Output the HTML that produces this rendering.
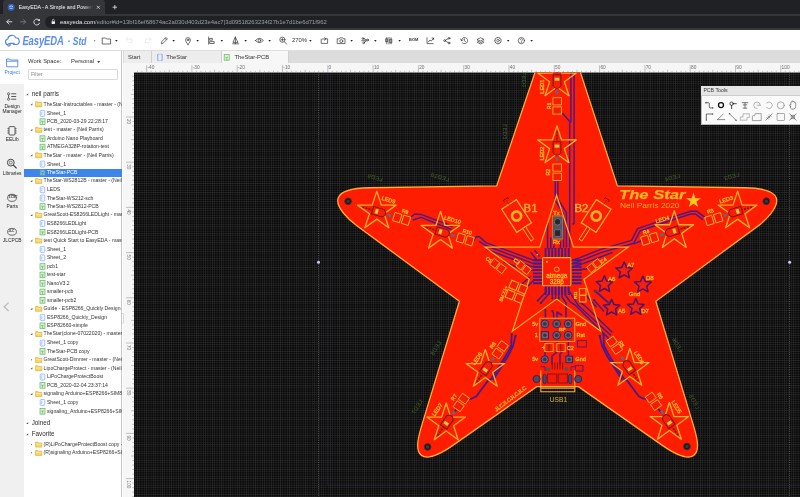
<!DOCTYPE html><html lang="en"><head><meta charset="utf-8"><title>EasyEDA - A Simple and Powerful Electronic Circuit Design Tool</title><style>

*{box-sizing:border-box;margin:0;padding:0}
html,body{width:800px;height:497px;overflow:hidden;background:#fff;font-family:"Liberation Sans",sans-serif;}
.abs{position:absolute}
.t{position:absolute;white-space:nowrap;line-height:1}
svg{position:absolute;overflow:visible}
#root{position:absolute;left:0;top:0;width:800px;height:497px;overflow:hidden;will-change:transform}


#tabstrip{left:0;top:0;width:800px;height:13.6px;background:#202124}
#atab{left:3px;top:0;width:102px;height:13.6px;background:#35363a;border-radius:3px 3px 0 0}
#addr{left:0;top:13.5px;width:800px;height:16.2px;background:#35363a}
#pill{left:45px;top:16px;width:770px;height:12px;background:#202124;border-radius:6px}
#toolbar{left:0;top:29.6px;width:800px;height:21px;background:#fff;border-bottom:0.5px solid #ddd}
#etabs{left:122.5px;top:50.6px;width:678px;height:12.6px;background:#dcdcdc}
.etab{position:absolute;top:0;height:12.6px;background:#ededed;border-right:0.5px solid #d0d0d0}


#nav{left:0;top:50.6px;width:24.4px;height:447px;background:#f0f0f0}
#navact{left:0;top:50.6px;width:24.4px;height:33px;background:#fff}
#tree{left:24.4px;top:50.6px;width:98px;height:447px;background:#fff;overflow:hidden;border-right:0.6px solid #c9c9c9}
.nl{position:absolute;left:0;width:24.4px;text-align:center;font-size:4.9px;line-height:5.7px;color:#222;white-space:nowrap}
.tr{position:absolute;white-space:nowrap;line-height:1;font-size:5.14px;color:#2a2a2a}
.hd{position:absolute;white-space:nowrap;line-height:1;font-size:6.3px;color:#2a2a2a}
#sel{left:24.4px;top:168.6px;width:97.6px;height:8.2px;background:#3d85ea}
#filter{left:28.4px;top:69.4px;width:89.4px;height:10.2px;border:0.5px solid #dadada;border-radius:1px;background:#fff}


#cv{left:0;top:0;width:800px;height:497px}
#rulh{left:122.5px;top:63.2px;width:678px;height:9.3px;background:#f6f6f6}
#rulv{left:122.5px;top:63.2px;width:11.5px;height:434px;background:#f6f6f6}
#tools{left:701px;top:85.7px;width:110px;height:39.1px;background:#fafafa;border:0.5px solid #bbb}
#toolsh{left:701px;top:85.7px;width:110px;height:9.9px;background:#e6e6e6;border-bottom:0.5px solid #ccc}

</style></head><body>
<div id="root">
<svg id="cv" width="800" height="497" viewBox="0 0 800 497" style="left:0;top:0">
<defs>
<pattern id="grid" x="327.80" y="485.00" width="2.27" height="2.27" patternUnits="userSpaceOnUse"><rect width="2.27" height="2.27" fill="#080808"/><path d="M0 0.25H2.27M0.25 0V2.27" stroke="#353535" stroke-width="0.5"/></pattern>
<clipPath id="cvclip"><rect x="134.0" y="72.5" width="666.0" height="424.5"/></clipPath>
</defs>
<rect x="134.0" y="72.5" width="666.0" height="424.5" fill="url(#grid)"/>
<g clip-path="url(#cvclip)">
<path d="M318.5 72.5V497M789.6 72.5V497" stroke="#9a9a9a" stroke-width="0.6" stroke-dasharray="1 1.2" opacity="0.8"/>
<path d="M327.6 72.5V485H800" stroke="#34346c" stroke-width="0.6" fill="none" opacity="0.6"/>
<circle cx="318.5" cy="262.2" r="1.5" fill="#d2d2ff"/><circle cx="789.6" cy="262.2" r="1.5" fill="#d2d2ff"/>
<path d="M539.2 60L496.70 185.90L369.91 187.74C359.91 187.88 341.00 189.05 338.10 198.10C335.20 207.15 349.16 220.11 357.22 226.03L459.40 301.20L422.67 422.42C419.77 431.99 413.75 449.83 421.44 455.40C429.13 460.98 445.01 450.85 453.21 445.12L536.80 386.60L578.40 386.60L661.99 445.12C670.19 450.85 686.07 460.98 693.76 455.40C701.45 449.83 695.43 431.99 692.53 422.42L655.80 301.20L757.51 226.38C765.57 220.46 779.20 207.05 776.30 198.00C773.40 188.95 754.49 187.89 744.49 187.74L617.40 185.90L576.4 60Z" fill="#ff1d00" stroke="#ffac38" stroke-width="1.3" stroke-linejoin="round"/>
<g font-family="'Liberation Sans',sans-serif">
<g fill="none" stroke="#471a8e" stroke-width="1.5" stroke-linejoin="round" stroke-linecap="round">
<path d="M570.9 60 L570.9 121 L569.7 123 L569.7 247M574.1 60 L574.1 223M560.6 113.4 L563 113.8 L569.7 121.6M555.3 180.6 L555.3 200.4 L563.6 213.8 L563.6 247M557.9 180.6 L557.9 199 L566.4 212.6 L566.4 247M547.6 224 L547.6 248 M550.8 238 L550.8 248 M553.8 241 L553.8 248 M560.4 242 L560.4 248M411 217 L414.6 214 L421 214.4 L452 226.2M413.6 219.8 L421 217.4 L451 229.2M473.6 240.6 L476.6 236.4 L479.4 236.8 L486 242.6 L534 260.4 L542.6 260.4M479.6 241.6 L486.4 245.8 L533 263.400 L542.6 263.7M487 249.4 L532 266.600 L542.6 267M504 262 L520 268.600 L530 270.200 L542.6 270.300M572 260.4 L580 257.6 L600 249.6 L631.6 240.4 L637.6 228.6 L656 222.4 L690.6 211.2 L696.6 211.2 L704.4 216.8M572 263.7 L581 260.6 L601 252.6 L633.8 243.2 L640 231 L657 225 L690.6 214 L695.6 214 L702.4 219.4M634.4 243.6 L641 241M572 267 L583 263.6 L612 252.6 M572 270.3 L586 269 L600 262M546 286 L546 292 L537.8 300.6 M549.2 286 L549.2 293.6 L540.8 303M552.4 286 L552.4 298.4 M555.6 286 L555.6 298.4 M558.8 286 L558.8 298.4M562 286 L562 297 L566 303 L566 318 M565.2 286 L565.2 295 L570.4 302 L575.4 305.2M568.4 286 L568.4 290 L578.6 305.8 L610.4 335M575.4 305.2 L608.6 338.4 M579 301.8 L584 305 L612 332M553.6 318 L553.6 313.6 L552.4 311 M557 318 L557 312 L561.6 315 M545.4 320 L545.4 310M545 341 L545 356 M557 341 L557 352 L552 356 L552 364 M568.4 341 L568.4 356 M560 364 L560 354 L565 349M594 300 L603.6 311 M586.6 296 L596 306.6M535 250.6 L539 256 M531 252.6 L536 259 M527 287 L534 280 M522 284 L530 277"/>
<path d="M511.7 334.3 L511.2 345.6 L506.6 354.6 L491.6 378.6 L488.2 380.4 L476.400 396.200 L471.400 398.800 L468.600 398.800M603.5 334.3L604.0 345.6L608.6 354.6L623.6 378.6L627.0 380.4L638.8 396.200L643.8 398.800L646.6 398.800M515.5 335.8 L513 346.2 L508.4 355.6 L493.4 379.4M599.7 335.8L602.2 346.2L606.8 355.6L621.8 379.4M456.400 409.600 L453.600 412.600M658.8 409.600L661.6 412.600" stroke-width="1.800"/>
<path d="M545.6 248V257M545.6 286.400V295M533 260.2H542M572 260.2H581.600M548.9 248V257M548.9 286.400V295M533 263.5H542M572 263.5H581.600M552.2 248V257M552.2 286.400V295M533 266.8H542M572 266.8H581.600M555.5 248V257M555.5 286.400V295M533 270.1H542M572 270.1H581.600M558.8 248V257M558.8 286.400V295M533 273.4H542M572 273.4H581.600M562.1 248V257M562.1 286.400V295M533 276.7H542M572 276.7H581.600M565.4 248V257M565.4 286.400V295M533 280.0H542M572 280.0H581.600M568.7 248V257M568.7 286.400V295M533 283.3H542M572 283.3H581.600" stroke-width="1.900" stroke-linecap="butt"/>
<circle cx="573.4" cy="223.8" r="1.1" fill="#3c2a5a" stroke="none"/>
<circle cx="511.7" cy="334.3" r="1.1" fill="#3c2a5a" stroke="none"/>
<circle cx="515.5" cy="335.8" r="1.1" fill="#3c2a5a" stroke="none"/>
<circle cx="603.5" cy="334.3" r="1.1" fill="#3c2a5a" stroke="none"/>
<circle cx="599.7" cy="335.8" r="1.1" fill="#3c2a5a" stroke="none"/>
<circle cx="537.8" cy="300.6" r="1.1" fill="#3c2a5a" stroke="none"/>
<circle cx="540.8" cy="303" r="1.1" fill="#3c2a5a" stroke="none"/>
<circle cx="552.4" cy="298.4" r="1.1" fill="#3c2a5a" stroke="none"/>
<circle cx="555.6" cy="298.4" r="1.1" fill="#3c2a5a" stroke="none"/>
<circle cx="558.8" cy="298.4" r="1.1" fill="#3c2a5a" stroke="none"/>
<circle cx="552.4" cy="311" r="1.1" fill="#3c2a5a" stroke="none"/>
<circle cx="545.4" cy="310" r="1.1" fill="#3c2a5a" stroke="none"/>
<circle cx="594" cy="300" r="1.1" fill="#3c2a5a" stroke="none"/>
<circle cx="586.6" cy="296" r="1.1" fill="#3c2a5a" stroke="none"/>
<circle cx="547.6" cy="224" r="1.1" fill="#3c2a5a" stroke="none"/>
</g>
<polygon points="556.60,195.20 573.48,247.16 628.12,247.16 583.92,279.28 600.80,331.24 556.60,299.13 512.40,331.24 529.28,279.28 485.08,247.16 539.72,247.16" fill="none" stroke="#ffb024" stroke-width="1.2"/>
<polygon points="557.00,59.00 561.56,73.03 576.31,73.03 564.38,81.70 568.93,95.72 557.00,87.05 545.07,95.72 549.62,81.70 537.69,73.03 552.44,73.03" fill="none" stroke="#ffb024" stroke-width="1.3" stroke-linejoin="round"/>
<g transform="translate(557.0 79.3) rotate(90)"><path d="M-4.500 -3.900H6.500L9 -1.500V1.500L6.500 3.900H-4.500Z" fill="#f62008" stroke="#7c1420" stroke-width="1"/><path d="M-15 0H-5" stroke="#7c1420" stroke-width="1.600" stroke-dasharray="2 1.200"/><rect x="-1.600" y="-2.400" width="3" height="4.800" fill="#ffc640"/><ellipse cx="13" cy="0" rx="2" ry="1.600" fill="#6c6282"/></g>
<g transform="translate(557.2 105.9) rotate(90)" fill="#f41c06" stroke="#ffb024" stroke-width="0.900"><rect x="-8.20" y="-4.30" width="7.2" height="8.6"/><rect x="1.00" y="-4.30" width="7.2" height="8.6"/></g>
<text x="541.8" y="86.6" font-size="5.61" fill="#ffb024" stroke="#ffb024" stroke-width="0.38" text-anchor="middle" dominant-baseline="central" transform="rotate(-90 541.8 86.6)" >LED1</text>
<text x="549.2" y="106" font-size="5.12" fill="#ffb024" stroke="#ffb024" stroke-width="0.38" text-anchor="middle" dominant-baseline="central" transform="rotate(-90 549.2 106)" >R1</text>
<polygon points="557.00,125.90 561.56,139.93 576.31,139.93 564.38,148.60 568.93,162.62 557.00,153.95 545.07,162.62 549.62,148.60 537.69,139.93 552.44,139.93" fill="none" stroke="#ffb024" stroke-width="1.3" stroke-linejoin="round"/>
<g transform="translate(557.0 146.2) rotate(90)"><path d="M-4.500 -3.900H6.500L9 -1.500V1.500L6.500 3.900H-4.500Z" fill="#f62008" stroke="#7c1420" stroke-width="1"/><path d="M-15 0H-5" stroke="#7c1420" stroke-width="1.600" stroke-dasharray="2 1.200"/><rect x="-1.600" y="-2.400" width="3" height="4.800" fill="#ffc640"/><ellipse cx="13" cy="0" rx="2" ry="1.600" fill="#6c6282"/></g>
<g transform="translate(557.2 172.2) rotate(90)" fill="#f41c06" stroke="#ffb024" stroke-width="0.900"><rect x="-8.20" y="-4.30" width="7.2" height="8.6"/><rect x="1.00" y="-4.30" width="7.2" height="8.6"/></g>
<text x="541.6" y="153.5" font-size="5.61" fill="#ffb024" stroke="#ffb024" stroke-width="0.38" text-anchor="middle" dominant-baseline="central" transform="rotate(-90 541.6 153.5)" >LED2</text>
<text x="548.2" y="172.2" font-size="5.12" fill="#ffb024" stroke="#ffb024" stroke-width="0.38" text-anchor="middle" dominant-baseline="central" transform="rotate(-90 548.2 172.2)" >R2</text>
<polygon points="376.80,191.10 381.36,205.13 396.11,205.13 384.18,213.80 388.73,227.82 376.80,219.15 364.87,227.82 369.42,213.80 357.49,205.13 372.24,205.13" fill="none" stroke="#ffb024" stroke-width="1.3" stroke-linejoin="round"/>
<g transform="translate(376.8 211.4) rotate(17)"><path d="M-4.500 -3.900H6.500L9 -1.500V1.500L6.500 3.900H-4.500Z" fill="#f62008" stroke="#7c1420" stroke-width="1"/><path d="M-15 0H-5" stroke="#7c1420" stroke-width="1.600" stroke-dasharray="2 1.200"/><rect x="-1.600" y="-2.400" width="3" height="4.800" fill="#ffc640"/><ellipse cx="13" cy="0" rx="2" ry="1.600" fill="#6c6282"/></g>
<g transform="translate(401.6 218.9) rotate(17)" fill="#f41c06" stroke="#ffb024" stroke-width="0.900"><rect x="-8.20" y="-4.30" width="7.2" height="8.6"/><rect x="1.00" y="-4.30" width="7.2" height="8.6"/></g>
<text x="388.6" y="199.8" font-size="5.61" fill="#ffb024" stroke="#ffb024" stroke-width="0.38" text-anchor="middle" dominant-baseline="central" transform="rotate(17 388.6 199.8)" >LED9</text>
<text x="405.2" y="211.2" font-size="5.12" fill="#ffb024" stroke="#ffb024" stroke-width="0.38" text-anchor="middle" dominant-baseline="central" transform="rotate(17 405.2 211.2)" >R9</text>
<polygon points="440.50,211.40 445.06,225.43 459.81,225.43 447.88,234.10 452.43,248.12 440.50,239.45 428.57,248.12 433.12,234.10 421.19,225.43 435.94,225.43" fill="none" stroke="#ffb024" stroke-width="1.3" stroke-linejoin="round"/>
<g transform="translate(440.5 231.7) rotate(17)"><path d="M-4.500 -3.900H6.500L9 -1.500V1.500L6.500 3.900H-4.500Z" fill="#f62008" stroke="#7c1420" stroke-width="1"/><path d="M-15 0H-5" stroke="#7c1420" stroke-width="1.600" stroke-dasharray="2 1.200"/><rect x="-1.600" y="-2.400" width="3" height="4.800" fill="#ffc640"/><ellipse cx="13" cy="0" rx="2" ry="1.600" fill="#6c6282"/></g>
<g transform="translate(465.2 239.4) rotate(17)" fill="#f41c06" stroke="#ffb024" stroke-width="0.900"><rect x="-8.20" y="-4.30" width="7.2" height="8.6"/><rect x="1.00" y="-4.30" width="7.2" height="8.6"/></g>
<text x="452.6" y="219.8" font-size="5.61" fill="#ffb024" stroke="#ffb024" stroke-width="0.38" text-anchor="middle" dominant-baseline="central" transform="rotate(17 452.6 219.8)" >LED10</text>
<text x="467.4" y="231.6" font-size="5.12" fill="#ffb024" stroke="#ffb024" stroke-width="0.38" text-anchor="middle" dominant-baseline="central" transform="rotate(17 467.4 231.6)" >R10</text>
<polygon points="737.60,191.10 742.16,205.13 756.91,205.13 744.98,213.80 749.53,227.82 737.60,219.15 725.67,227.82 730.22,213.80 718.29,205.13 733.04,205.13" fill="none" stroke="#ffb024" stroke-width="1.3" stroke-linejoin="round"/>
<g transform="translate(737.6 211.4) rotate(163)"><path d="M-4.500 -3.900H6.500L9 -1.500V1.500L6.500 3.900H-4.500Z" fill="#f62008" stroke="#7c1420" stroke-width="1"/><path d="M-15 0H-5" stroke="#7c1420" stroke-width="1.600" stroke-dasharray="2 1.200"/><rect x="-1.600" y="-2.400" width="3" height="4.800" fill="#ffc640"/><ellipse cx="13" cy="0" rx="2" ry="1.600" fill="#6c6282"/></g>
<g transform="translate(713.8 219.1) rotate(-17)" fill="#f41c06" stroke="#ffb024" stroke-width="0.900"><rect x="-8.20" y="-4.30" width="7.2" height="8.6"/><rect x="1.00" y="-4.30" width="7.2" height="8.6"/></g>
<text x="726.2" y="199.6" font-size="5.61" fill="#ffb024" stroke="#ffb024" stroke-width="0.38" text-anchor="middle" dominant-baseline="central" transform="rotate(-17 726.2 199.6)" >LED3</text>
<text x="710.2" y="211.0" font-size="5.12" fill="#ffb024" stroke="#ffb024" stroke-width="0.38" text-anchor="middle" dominant-baseline="central" transform="rotate(-17 710.2 211.0)" >R3</text>
<polygon points="674.30,210.70 678.86,224.73 693.61,224.73 681.68,233.40 686.23,247.42 674.30,238.75 662.37,247.42 666.92,233.40 654.99,224.73 669.74,224.73" fill="none" stroke="#ffb024" stroke-width="1.3" stroke-linejoin="round"/>
<g transform="translate(674.3 231.0) rotate(163)"><path d="M-4.500 -3.900H6.500L9 -1.500V1.500L6.500 3.900H-4.500Z" fill="#f62008" stroke="#7c1420" stroke-width="1"/><path d="M-15 0H-5" stroke="#7c1420" stroke-width="1.600" stroke-dasharray="2 1.200"/><rect x="-1.600" y="-2.400" width="3" height="4.800" fill="#ffc640"/><ellipse cx="13" cy="0" rx="2" ry="1.600" fill="#6c6282"/></g>
<g transform="translate(649.7 238.9) rotate(-17)" fill="#f41c06" stroke="#ffb024" stroke-width="0.900"><rect x="-8.20" y="-4.30" width="7.2" height="8.6"/><rect x="1.00" y="-4.30" width="7.2" height="8.6"/></g>
<text x="662.4" y="219.4" font-size="5.61" fill="#ffb024" stroke="#ffb024" stroke-width="0.38" text-anchor="middle" dominant-baseline="central" transform="rotate(-17 662.4 219.4)" >LED4</text>
<text x="646.0" y="231.6" font-size="5.12" fill="#ffb024" stroke="#ffb024" stroke-width="0.38" text-anchor="middle" dominant-baseline="central" transform="rotate(-17 646.0 231.6)" >R4</text>
<polygon points="485.30,349.50 489.86,363.53 504.61,363.53 492.68,372.20 497.23,386.22 485.30,377.55 473.37,386.22 477.92,372.20 465.99,363.53 480.74,363.53" fill="none" stroke="#ffb024" stroke-width="1.3" stroke-linejoin="round"/>
<g transform="translate(485.3 369.8) rotate(-55)"><path d="M-4.500 -3.900H6.500L9 -1.500V1.500L6.500 3.900H-4.500Z" fill="#f62008" stroke="#7c1420" stroke-width="1"/><path d="M-15 0H-5" stroke="#7c1420" stroke-width="1.600" stroke-dasharray="2 1.200"/><rect x="-1.600" y="-2.400" width="3" height="4.800" fill="#ffc640"/><ellipse cx="13" cy="0" rx="2" ry="1.600" fill="#6c6282"/></g>
<g transform="translate(500.1 349.8) rotate(-55)" fill="#f41c06" stroke="#ffb024" stroke-width="0.900"><rect x="-8.20" y="-4.30" width="7.2" height="8.6"/><rect x="1.00" y="-4.30" width="7.2" height="8.6"/></g>
<text x="477.0" y="358.6" font-size="5.61" fill="#ffb024" stroke="#ffb024" stroke-width="0.38" text-anchor="middle" dominant-baseline="central" transform="rotate(-55 477.0 358.6)" >LED8</text>
<text x="492.6" y="345.2" font-size="5.12" fill="#ffb024" stroke="#ffb024" stroke-width="0.38" text-anchor="middle" dominant-baseline="central" transform="rotate(-55 492.6 345.2)" >R8</text>
<polygon points="446.20,403.00 450.76,417.03 465.51,417.03 453.58,425.70 458.13,439.72 446.20,431.05 434.27,439.72 438.82,425.70 426.89,417.03 441.64,417.03" fill="none" stroke="#ffb024" stroke-width="1.3" stroke-linejoin="round"/>
<g transform="translate(446.2 423.3) rotate(-55)"><path d="M-4.500 -3.900H6.500L9 -1.500V1.500L6.500 3.900H-4.500Z" fill="#f62008" stroke="#7c1420" stroke-width="1"/><path d="M-15 0H-5" stroke="#7c1420" stroke-width="1.600" stroke-dasharray="2 1.200"/><rect x="-1.600" y="-2.400" width="3" height="4.800" fill="#ffc640"/><ellipse cx="13" cy="0" rx="2" ry="1.600" fill="#6c6282"/></g>
<g transform="translate(461.3 402.5) rotate(-55)" fill="#f41c06" stroke="#ffb024" stroke-width="0.900"><rect x="-8.20" y="-4.30" width="7.2" height="8.6"/><rect x="1.00" y="-4.30" width="7.2" height="8.6"/></g>
<text x="437.2" y="409.6" font-size="5.61" fill="#ffb024" stroke="#ffb024" stroke-width="0.38" text-anchor="middle" dominant-baseline="central" transform="rotate(-55 437.2 409.6)" >LED7</text>
<text x="453.8" y="397.2" font-size="5.12" fill="#ffb024" stroke="#ffb024" stroke-width="0.38" text-anchor="middle" dominant-baseline="central" transform="rotate(-55 453.8 397.2)" >R7</text>
<polygon points="629.80,348.50 634.36,362.53 649.11,362.53 637.18,371.20 641.73,385.22 629.80,376.55 617.87,385.22 622.42,371.20 610.49,362.53 625.24,362.53" fill="none" stroke="#ffb024" stroke-width="1.3" stroke-linejoin="round"/>
<g transform="translate(629.8 368.8) rotate(-125)"><path d="M-4.500 -3.900H6.500L9 -1.500V1.500L6.500 3.900H-4.500Z" fill="#f62008" stroke="#7c1420" stroke-width="1"/><path d="M-15 0H-5" stroke="#7c1420" stroke-width="1.600" stroke-dasharray="2 1.200"/><rect x="-1.600" y="-2.400" width="3" height="4.800" fill="#ffc640"/><ellipse cx="13" cy="0" rx="2" ry="1.600" fill="#6c6282"/></g>
<g transform="translate(614.4 345.3) rotate(55)" fill="#f41c06" stroke="#ffb024" stroke-width="0.900"><rect x="-8.20" y="-4.30" width="7.2" height="8.6"/><rect x="1.00" y="-4.30" width="7.2" height="8.6"/></g>
<text x="639.2" y="357.6" font-size="5.61" fill="#ffb024" stroke="#ffb024" stroke-width="0.38" text-anchor="middle" dominant-baseline="central" transform="rotate(58 639.2 357.6)" >LED6</text>
<text x="621.6" y="344.0" font-size="5.12" fill="#ffb024" stroke="#ffb024" stroke-width="0.38" text-anchor="middle" dominant-baseline="central" transform="rotate(58 621.6 344.0)" >R5</text>
<polygon points="669.40,402.50 673.96,416.53 688.71,416.53 676.78,425.20 681.33,439.22 669.40,430.55 657.47,439.22 662.02,425.20 650.09,416.53 664.84,416.53" fill="none" stroke="#ffb024" stroke-width="1.3" stroke-linejoin="round"/>
<g transform="translate(669.4 422.8) rotate(-125)"><path d="M-4.500 -3.900H6.500L9 -1.500V1.500L6.500 3.900H-4.500Z" fill="#f62008" stroke="#7c1420" stroke-width="1"/><path d="M-15 0H-5" stroke="#7c1420" stroke-width="1.600" stroke-dasharray="2 1.200"/><rect x="-1.600" y="-2.400" width="3" height="4.800" fill="#ffc640"/><ellipse cx="13" cy="0" rx="2" ry="1.600" fill="#6c6282"/></g>
<g transform="translate(653.4 401.3) rotate(55)" fill="#f41c06" stroke="#ffb024" stroke-width="0.900"><rect x="-8.20" y="-4.30" width="7.2" height="8.6"/><rect x="1.00" y="-4.30" width="7.2" height="8.6"/></g>
<text x="676.6" y="407.0" font-size="5.61" fill="#ffb024" stroke="#ffb024" stroke-width="0.38" text-anchor="middle" dominant-baseline="central" transform="rotate(58 676.6 407.0)" >LED5</text>
<text x="660.2" y="395.6" font-size="5.12" fill="#ffb024" stroke="#ffb024" stroke-width="0.38" text-anchor="middle" dominant-baseline="central" transform="rotate(58 660.2 395.6)" >R6</text>
<circle cx="348.1" cy="201.3" r="3.4" fill="#1c1c20" stroke="#5a2a30" stroke-width="0.900"/><circle cx="348.1" cy="201.3" r="1.53" fill="#3a3a40"/>
<circle cx="766.3" cy="201.2" r="3.4" fill="#1c1c20" stroke="#5a2a30" stroke-width="0.900"/><circle cx="766.3" cy="201.2" r="1.53" fill="#3a3a40"/>
<circle cx="427.6" cy="446.9" r="3.4" fill="#1c1c20" stroke="#5a2a30" stroke-width="0.900"/><circle cx="427.6" cy="446.9" r="1.53" fill="#3a3a40"/>
<circle cx="686.9" cy="446.5" r="3.4" fill="#1c1c20" stroke="#5a2a30" stroke-width="0.900"/><circle cx="686.9" cy="446.5" r="1.53" fill="#3a3a40"/>
<text x="619" y="198.7" font-size="13.4" font-weight="bold" font-style="italic" fill="#ffb81e" stroke="#ffb81e" stroke-width="0.25" textLength="66.5" lengthAdjust="spacingAndGlyphs">The Star</text>
<text x="620" y="208.1" font-size="7.3" fill="#ffac28" textLength="59.5" lengthAdjust="spacingAndGlyphs">Neil Parris 2020</text>
<polygon points="693.50,192.60 695.30,198.13 701.11,198.13 696.41,201.54 698.20,207.07 693.50,203.66 688.80,207.07 690.59,201.54 685.89,198.13 691.70,198.13" fill="#ffc81e"/>
<g transform="translate(516.6 216.0) rotate(57)"><rect x="-13.800" y="-8.800" width="27.600" height="17.600" fill="#fb1e06" stroke="#ffb024" stroke-width="1.200"/><circle cx="0" cy="0" r="4.500" fill="none" stroke="#ffb024" stroke-width="2.700"/><rect x="13.800" y="-1.700" width="15" height="3.400" fill="#e8200c" stroke="#ffb024" stroke-width="0.900"/><path d="M-18.500 -2.600h-1.800v5.200h1.800" fill="none" stroke="#7c1420" stroke-width="0.900"/><path d="M-13.800 0h-5" stroke="#7c1420" stroke-width="0.800" stroke-dasharray="1.200 1"/></g>
<text x="530.6" y="207.6" font-size="11.47" fill="#ffb428" stroke="#ffb428" stroke-width="0.38" text-anchor="middle" dominant-baseline="central" >B1</text>
<g transform="translate(596.2 216.0) rotate(123)"><rect x="-13.800" y="-8.800" width="27.600" height="17.600" fill="#fb1e06" stroke="#ffb024" stroke-width="1.200"/><circle cx="0" cy="0" r="4.500" fill="none" stroke="#ffb024" stroke-width="2.700"/><rect x="13.800" y="-1.700" width="15" height="3.400" fill="#e8200c" stroke="#ffb024" stroke-width="0.900"/><path d="M-18.500 -2.600h-1.800v5.200h1.800" fill="none" stroke="#7c1420" stroke-width="0.900"/><path d="M-13.800 0h-5" stroke="#7c1420" stroke-width="0.800" stroke-dasharray="1.200 1"/></g>
<text x="581.4" y="207.6" font-size="11.47" fill="#ffb428" stroke="#ffb428" stroke-width="0.38" text-anchor="middle" dominant-baseline="central" >B2</text>
<rect x="552.600" y="216" width="10.200" height="23" fill="#55555f" stroke="#c8862a" stroke-width="0.800"/>
<circle cx="557.600" cy="221.800" r="3.300" fill="#26262c" stroke="#74748a" stroke-width="0.900"/><rect x="554.300" y="229.800" width="6.600" height="6.600" rx="1" fill="#26262c" stroke="#74748a" stroke-width="0.900"/>
<text x="556.4" y="213.2" font-size="5.61" fill="#ffb024" stroke="#ffb024" stroke-width="0.38" text-anchor="middle" dominant-baseline="central" >Tx</text>
<text x="556.4" y="242.4" font-size="5.61" fill="#ffb024" stroke="#ffb024" stroke-width="0.38" text-anchor="middle" dominant-baseline="central" >Rx</text>
<rect x="542.600" y="257.600" width="28.200" height="28.200" rx="1" fill="#fa1c04" stroke="#ffb024" stroke-width="1.100"/>
<circle cx="556.800" cy="269.400" r="2.400" fill="none" stroke="#ffb024" stroke-width="0.900"/>
<circle cx="547" cy="261.800" r="1.100" fill="#ffb024"/><circle cx="537.400" cy="254.600" r="0.900" fill="#ffb024"/>
<text x="556.8" y="275.8" font-size="6.34" fill="#ffb024" stroke="#ffb024" stroke-width="0.38" text-anchor="middle" dominant-baseline="central" >atmega</text>
<text x="556.8" y="281.4" font-size="6.34" fill="#ffb024" stroke="#ffb024" stroke-width="0.38" text-anchor="middle" dominant-baseline="central" >328p</text>
<g transform="translate(498.0 266.0) rotate(38)" fill="#f41c06" stroke="#ffb024" stroke-width="0.900"><rect x="-7.70" y="-3.70" width="7" height="7.4"/><rect x="0.70" y="-3.70" width="7" height="7.4"/></g>
<text x="489.0" y="259.6" font-size="5.12" fill="#ffb024" stroke="#ffb024" stroke-width="0.38" text-anchor="middle" dominant-baseline="central" transform="rotate(38 489.0 259.6)" >C1</text>
<g transform="translate(523.6 267.6) rotate(38)" fill="#f41c06" stroke="#ffb024" stroke-width="0.900"><rect x="-7.00" y="-3.50" width="6.4" height="7"/><rect x="0.60" y="-3.50" width="6.4" height="7"/></g>
<text x="516.8" y="261.2" font-size="5.12" fill="#ffb024" stroke="#ffb024" stroke-width="0.38" text-anchor="middle" dominant-baseline="central" transform="rotate(38 516.8 261.2)" >C3</text>
<g transform="translate(594.4 265.6) rotate(-38)" fill="#f41c06" stroke="#ffb024" stroke-width="0.900"><rect x="-7.00" y="-3.50" width="6.4" height="7"/><rect x="0.60" y="-3.50" width="6.4" height="7"/></g>
<text x="603.4" y="260.4" font-size="5.12" fill="#ffb024" stroke="#ffb024" stroke-width="0.38" text-anchor="middle" dominant-baseline="central" transform="rotate(-38 603.4 260.4)" >C4</text>
<g transform="translate(516.400 291.800) rotate(22)" fill="#f41c06" stroke="#ffb024" stroke-width="1"><rect x="-8.600" y="-9" width="7.600" height="8"/><rect x="1" y="-9" width="7.600" height="8"/><rect x="-8.600" y="1" width="7.600" height="8"/><rect x="1" y="1" width="7.600" height="8"/></g>
<text x="503.6" y="293.6" font-size="4.64" fill="#ffb024" stroke="#ffb024" stroke-width="0.38" text-anchor="middle" dominant-baseline="central" transform="rotate(-68 503.6 293.6)" >8M X1+</text>
<rect x="579.400" y="288.600" width="6.600" height="13.400" fill="#f41c06" stroke="#ffb024" stroke-width="1"/><path d="M579.400 295.300h6.600" stroke="#ffb024" stroke-width="1.400"/>
<text x="575.8" y="295" font-size="4.15" fill="#ffb024" stroke="#ffb024" stroke-width="0.38" text-anchor="middle" dominant-baseline="central" transform="rotate(-90 575.8 295)" >R11</text>
<path d="M595.200 291L608.300 302.700" stroke="#471a8e" stroke-width="1.800" stroke-linecap="round"/><circle cx="595.200" cy="291" r="1.500" fill="#4a3a66"/><circle cx="608.300" cy="302.700" r="1.500" fill="#4a3a66"/>
<polygon points="624.20,262.00 626.60,267.39 632.47,268.01 628.09,271.96 629.31,277.74 624.20,274.79 619.09,277.74 620.31,271.96 615.93,268.01 621.80,267.39" fill="#f91e0c" stroke="#4e126c" stroke-width="1.500" stroke-linejoin="round"/><circle cx="624.2" cy="271.09999999999997" r="0.900" fill="#a0502c"/>
<text x="630.8" y="264.6" font-size="5.98" fill="#ffb024" stroke="#ffb024" stroke-width="0.38" text-anchor="middle" dominant-baseline="central" >A7</text>
<polygon points="604.40,275.70 606.80,281.09 612.67,281.71 608.29,285.66 609.51,291.44 604.40,288.49 599.29,291.44 600.51,285.66 596.13,281.71 602.00,281.09" fill="#f91e0c" stroke="#4e126c" stroke-width="1.500" stroke-linejoin="round"/><circle cx="604.4" cy="284.79999999999995" r="0.900" fill="#a0502c"/>
<text x="611.6" y="278.6" font-size="5.98" fill="#ffb024" stroke="#ffb024" stroke-width="0.38" text-anchor="middle" dominant-baseline="central" >A6</text>
<polygon points="642.90,276.10 645.30,281.49 651.17,282.11 646.79,286.06 648.01,291.84 642.90,288.89 637.79,291.84 639.01,286.06 634.63,282.11 640.50,281.49" fill="#f91e0c" stroke="#4e126c" stroke-width="1.500" stroke-linejoin="round"/><circle cx="642.9" cy="285.2" r="0.900" fill="#a0502c"/>
<text x="649.8" y="278.4" font-size="5.98" fill="#ffb024" stroke="#ffb024" stroke-width="0.38" text-anchor="middle" dominant-baseline="central" >D8</text>
<polygon points="611.60,299.20 614.00,304.59 619.87,305.21 615.49,309.16 616.71,314.94 611.60,311.99 606.49,314.94 607.71,309.16 603.33,305.21 609.20,304.59" fill="#f91e0c" stroke="#4e126c" stroke-width="1.500" stroke-linejoin="round"/><circle cx="611.6" cy="308.29999999999995" r="0.900" fill="#a0502c"/>
<text x="621.6" y="310.6" font-size="5.98" fill="#ffb024" stroke="#ffb024" stroke-width="0.38" text-anchor="middle" dominant-baseline="central" >A5</text>
<polygon points="635.80,298.60 638.20,303.99 644.07,304.61 639.69,308.56 640.91,314.34 635.80,311.39 630.69,314.34 631.91,308.56 627.53,304.61 633.40,303.99" fill="#f91e0c" stroke="#4e126c" stroke-width="1.500" stroke-linejoin="round"/><circle cx="635.8" cy="307.7" r="0.900" fill="#a0502c"/>
<text x="645.0" y="310.6" font-size="5.98" fill="#ffb024" stroke="#ffb024" stroke-width="0.38" text-anchor="middle" dominant-baseline="central" >D7</text>
<text x="634.4" y="294.2" font-size="5.86" fill="#ffb024" stroke="#ffb024" stroke-width="0.38" text-anchor="middle" dominant-baseline="central" >Gnd</text>
<rect x="539.800" y="318.200" width="35" height="23.200" fill="#f81c06" stroke="#ffb024" stroke-width="0.900"/>
<circle cx="544.9" cy="323.9" r="3.9" fill="#6a6478" stroke="#2a1a70" stroke-width="0.900"/><circle cx="544.9" cy="323.9" r="1.95" fill="#3a3640"/>
<rect x="541.3" y="331.7" width="7.2" height="7.2" fill="#6a6478" stroke="#2a1a70" stroke-width="0.900"/><circle cx="544.9" cy="335.3" r="1.80" fill="#3a3640"/>
<circle cx="556.7" cy="323.9" r="3.9" fill="#6a6478" stroke="#2a1a70" stroke-width="0.900"/><circle cx="556.7" cy="323.9" r="1.95" fill="#3a3640"/>
<circle cx="556.7" cy="335.3" r="3.9" fill="#6a6478" stroke="#2a1a70" stroke-width="0.900"/><circle cx="556.7" cy="335.3" r="1.95" fill="#3a3640"/>
<circle cx="568.2" cy="323.9" r="3.9" fill="#6a6478" stroke="#2a1a70" stroke-width="0.900"/><circle cx="568.2" cy="323.9" r="1.95" fill="#3a3640"/>
<circle cx="568.2" cy="335.3" r="3.9" fill="#6a6478" stroke="#2a1a70" stroke-width="0.900"/><circle cx="568.2" cy="335.3" r="1.95" fill="#3a3640"/>
<text x="535.2" y="323.9" font-size="5.61" fill="#ffb024" stroke="#ffb024" stroke-width="0.38" text-anchor="middle" dominant-baseline="central" >5v</text>
<text x="536.4" y="335.3" font-size="5.61" fill="#ffb024" stroke="#ffb024" stroke-width="0.38" text-anchor="middle" dominant-baseline="central" >1</text>
<text x="580.8" y="323.9" font-size="5.61" fill="#ffb024" stroke="#ffb024" stroke-width="0.38" text-anchor="middle" dominant-baseline="central" >Gnd</text>
<text x="580.6" y="335.3" font-size="5.61" fill="#ffb024" stroke="#ffb024" stroke-width="0.38" text-anchor="middle" dominant-baseline="central" >Rst</text>
<text x="562.4" y="329.8" font-size="3.90" fill="#ffb024" stroke="#ffb024" stroke-width="0.38" text-anchor="middle" dominant-baseline="central" >ISP</text>
<g transform="translate(555.0 347.6) rotate(0)" fill="#f41c06" stroke="#ffb024" stroke-width="0.900"><rect x="-10.20" y="-4.00" width="8.4" height="8"/><rect x="1.80" y="-4.00" width="8.4" height="8"/></g>
<text x="570.4" y="347.6" font-size="5.37" fill="#ffb024" stroke="#ffb024" stroke-width="0.38" text-anchor="middle" dominant-baseline="central" >C2</text>
<text x="543.4" y="346.8" font-size="5.61" fill="#ffb024" stroke="#ffb024" stroke-width="0.38" text-anchor="middle" dominant-baseline="central" >+</text>
<path d="M549 343.600v8M560.800 343.600v8" stroke="#7c1420" stroke-width="0.800"/>
<rect x="577.400" y="340.600" width="9" height="6.400" fill="none" stroke="#4a1a8c" stroke-width="0.900"/>
<circle cx="544.8" cy="359.4" r="3.6" fill="#6a6478" stroke="#2a1a70" stroke-width="0.900"/><circle cx="544.8" cy="359.4" r="1.80" fill="#3a3640"/>
<rect x="565.9000000000001" y="356.09999999999997" width="6.6" height="6.6" fill="#6a6478" stroke="#2a1a70" stroke-width="0.900"/><circle cx="569.2" cy="359.4" r="1.65" fill="#3a3640"/>
<text x="535.2" y="359.0" font-size="5.61" fill="#ffb024" stroke="#ffb024" stroke-width="0.38" text-anchor="middle" dominant-baseline="central" >5v</text>
<text x="580.6" y="359.2" font-size="5.61" fill="#ffb024" stroke="#ffb024" stroke-width="0.38" text-anchor="middle" dominant-baseline="central" >Gnd</text>
<path d="M540.600 366.800h4.400v4M575 366.800h-4v4" fill="none" stroke="#4a1a8c" stroke-width="0.900"/>
<rect x="575.400" y="365.600" width="7.600" height="5.400" fill="none" stroke="#4a1a8c" stroke-width="0.900"/>
<path d="M552.200 362.600v7M554.800 362.600v7M557.400 362.600v7M560 362.600v7M562.600 362.600v7" stroke="#8a1420" stroke-width="1.100" fill="none"/>
<rect x="546.200" y="367.400" width="3.600" height="3.600" fill="#55505e"/><rect x="564.800" y="367.400" width="3.600" height="3.600" fill="#55505e"/>
<rect x="547.600" y="374" width="9.200" height="9" fill="#f21a08" stroke="#7c1420" stroke-width="0.900"/><rect x="558.200" y="374" width="9.200" height="9" fill="#f21a08" stroke="#7c1420" stroke-width="0.900"/>
<path d="M540.800 370.400v21.400h34v-21.400" fill="none" stroke="#ffb024" stroke-width="1.100"/><path d="M540.800 388.200h34" stroke="#ffb024" stroke-width="1.200"/>
<circle cx="536.6" cy="379" r="3.600" fill="#4e4a5c" stroke="#33186a" stroke-width="0.900"/>
<circle cx="578.2" cy="379" r="3.600" fill="#4e4a5c" stroke="#33186a" stroke-width="0.900"/>
<rect x="543.0" y="374.400" width="3.200" height="9.200" rx="1.600" fill="#4e4a5c" stroke="#33186a" stroke-width="0.800"/>
<rect x="568.6" y="374.400" width="3.200" height="9.200" rx="1.600" fill="#4e4a5c" stroke="#33186a" stroke-width="0.800"/>
<text x="558.400" y="399.400" font-size="7" fill="#d6b03c" text-anchor="middle" dominant-baseline="central" textLength="17.400" lengthAdjust="spacingAndGlyphs">USB1</text>
<text x="510.4" y="398.6" font-size="5.37" fill="#ffb024" stroke="#ffb024" stroke-width="0.38" text-anchor="middle" dominant-baseline="central" transform="rotate(-37 510.4 398.6)" >JLCJLCJLCJLC</text>
<text transform="translate(524.2 80.0) rotate(-90) scale(-1 1)" font-size="5.800" letter-spacing="0.300" fill="#44642a" text-anchor="middle" dominant-baseline="central">LED1</text>
<text transform="translate(505.4 132.0) rotate(-90) scale(-1 1)" font-size="5.800" letter-spacing="0.300" fill="#44642a" text-anchor="middle" dominant-baseline="central">LED2</text>
<text transform="translate(375.0 177.6) rotate(15) scale(-1 1)" font-size="5.800" letter-spacing="0.300" fill="#44642a" text-anchor="middle" dominant-baseline="central">LED9</text>
<text transform="translate(440.0 177.0) rotate(15) scale(-1 1)" font-size="5.800" letter-spacing="0.300" fill="#44642a" text-anchor="middle" dominant-baseline="central">LED10</text>
<text transform="translate(672.4 177.6) rotate(-15) scale(-1 1)" font-size="5.800" letter-spacing="0.300" fill="#44642a" text-anchor="middle" dominant-baseline="central">LED4</text>
<text transform="translate(731.6 176.4) rotate(-15) scale(-1 1)" font-size="5.800" letter-spacing="0.300" fill="#44642a" text-anchor="middle" dominant-baseline="central">LED3</text>
<text transform="translate(435.8 348.2) rotate(-60) scale(-1 1)" font-size="5.800" letter-spacing="0.300" fill="#44642a" text-anchor="middle" dominant-baseline="central">LED8</text>
<text transform="translate(417.0 406.8) rotate(-60) scale(-1 1)" font-size="5.800" letter-spacing="0.300" fill="#44642a" text-anchor="middle" dominant-baseline="central">LED7</text>
<text transform="translate(677.4 344.8) rotate(60) scale(-1 1)" font-size="5.800" letter-spacing="0.300" fill="#44642a" text-anchor="middle" dominant-baseline="central">LED6</text>
<text transform="translate(694.4 401.6) rotate(60) scale(-1 1)" font-size="5.800" letter-spacing="0.300" fill="#44642a" text-anchor="middle" dominant-baseline="central">LED5</text>
</g>
</g>
</svg>
<div class="abs" id="rulh"></div><div class="abs" id="rulv"></div>
<svg width="800" height="497" viewBox="0 0 800 497" style="left:0;top:0" font-family="'Liberation Sans',sans-serif" font-size="4.8" fill="#6e6e6e">
<text x="147.40" y="69">-40</text>
<text x="192.70" y="69">-30</text>
<text x="238.00" y="69">-20</text>
<text x="283.30" y="69">-10</text>
<text x="328.60" y="69">0</text>
<text x="373.90" y="69">10</text>
<text x="419.20" y="69">20</text>
<text x="464.50" y="69">30</text>
<text x="509.80" y="69">40</text>
<text x="555.10" y="69">50</text>
<text x="600.40" y="69">60</text>
<text x="645.70" y="69">70</text>
<text x="691.00" y="69">80</text>
<text x="736.30" y="69">90</text>
<text x="781.60" y="69">100</text>
<text transform="translate(127.2 119.00) rotate(90)" font-size="4.6" fill="#707070">20</text>
<text transform="translate(127.2 164.20) rotate(90)" font-size="4.6" fill="#707070">30</text>
<text transform="translate(127.2 209.40) rotate(90)" font-size="4.6" fill="#707070">40</text>
<text transform="translate(127.2 254.60) rotate(90)" font-size="4.6" fill="#707070">50</text>
<text transform="translate(127.2 299.80) rotate(90)" font-size="4.6" fill="#707070">60</text>
<text transform="translate(127.2 345.00) rotate(90)" font-size="4.6" fill="#707070">70</text>
<text transform="translate(127.2 390.20) rotate(90)" font-size="4.6" fill="#707070">80</text>
<text transform="translate(127.2 435.40) rotate(90)" font-size="4.6" fill="#707070">90</text>
<text transform="translate(127.2 480.60) rotate(90)" font-size="4.6" fill="#707070">100</text>
<path d="M137.54 70.8V72.5M142.07 70.8V72.5M146.60 65.2V72.5M151.13 70.8V72.5M155.66 70.8V72.5M160.19 70.8V72.5M164.72 70.8V72.5M169.25 69.8V72.5M173.78 70.8V72.5M178.31 70.8V72.5M182.84 70.8V72.5M187.37 70.8V72.5M191.90 65.2V72.5M196.43 70.8V72.5M200.96 70.8V72.5M205.49 70.8V72.5M210.02 70.8V72.5M214.55 69.8V72.5M219.08 70.8V72.5M223.61 70.8V72.5M228.14 70.8V72.5M232.67 70.8V72.5M237.20 65.2V72.5M241.73 70.8V72.5M246.26 70.8V72.5M250.79 70.8V72.5M255.32 70.8V72.5M259.85 69.8V72.5M264.38 70.8V72.5M268.91 70.8V72.5M273.44 70.8V72.5M277.97 70.8V72.5M282.50 65.2V72.5M287.03 70.8V72.5M291.56 70.8V72.5M296.09 70.8V72.5M300.62 70.8V72.5M305.15 69.8V72.5M309.68 70.8V72.5M314.21 70.8V72.5M318.74 70.8V72.5M323.27 70.8V72.5M327.80 65.2V72.5M332.33 70.8V72.5M336.86 70.8V72.5M341.39 70.8V72.5M345.92 70.8V72.5M350.45 69.8V72.5M354.98 70.8V72.5M359.51 70.8V72.5M364.04 70.8V72.5M368.57 70.8V72.5M373.10 65.2V72.5M377.63 70.8V72.5M382.16 70.8V72.5M386.69 70.8V72.5M391.22 70.8V72.5M395.75 69.8V72.5M400.28 70.8V72.5M404.81 70.8V72.5M409.34 70.8V72.5M413.87 70.8V72.5M418.40 65.2V72.5M422.93 70.8V72.5M427.46 70.8V72.5M431.99 70.8V72.5M436.52 70.8V72.5M441.05 69.8V72.5M445.58 70.8V72.5M450.11 70.8V72.5M454.64 70.8V72.5M459.17 70.8V72.5M463.70 65.2V72.5M468.23 70.8V72.5M472.76 70.8V72.5M477.29 70.8V72.5M481.82 70.8V72.5M486.35 69.8V72.5M490.88 70.8V72.5M495.41 70.8V72.5M499.94 70.8V72.5M504.47 70.8V72.5M509.00 65.2V72.5M513.53 70.8V72.5M518.06 70.8V72.5M522.59 70.8V72.5M527.12 70.8V72.5M531.65 69.8V72.5M536.18 70.8V72.5M540.71 70.8V72.5M545.24 70.8V72.5M549.77 70.8V72.5M554.30 65.2V72.5M558.83 70.8V72.5M563.36 70.8V72.5M567.89 70.8V72.5M572.42 70.8V72.5M576.95 69.8V72.5M581.48 70.8V72.5M586.01 70.8V72.5M590.54 70.8V72.5M595.07 70.8V72.5M599.60 65.2V72.5M604.13 70.8V72.5M608.66 70.8V72.5M613.19 70.8V72.5M617.72 70.8V72.5M622.25 69.8V72.5M626.78 70.8V72.5M631.31 70.8V72.5M635.84 70.8V72.5M640.37 70.8V72.5M644.90 65.2V72.5M649.43 70.8V72.5M653.96 70.8V72.5M658.49 70.8V72.5M663.02 70.8V72.5M667.55 69.8V72.5M672.08 70.8V72.5M676.61 70.8V72.5M681.14 70.8V72.5M685.67 70.8V72.5M690.20 65.2V72.5M694.73 70.8V72.5M699.26 70.8V72.5M703.79 70.8V72.5M708.32 70.8V72.5M712.85 69.8V72.5M717.38 70.8V72.5M721.91 70.8V72.5M726.44 70.8V72.5M730.97 70.8V72.5M735.50 65.2V72.5M740.03 70.8V72.5M744.56 70.8V72.5M749.09 70.8V72.5M753.62 70.8V72.5M758.15 69.8V72.5M762.68 70.8V72.5M767.21 70.8V72.5M771.74 70.8V72.5M776.27 70.8V72.5M780.80 65.2V72.5M785.33 70.8V72.5M789.86 70.8V72.5M794.39 70.8V72.5M798.92 70.8V72.5M132.2 76.32H134M132.2 80.84H134M132.2 85.36H134M132.2 89.88H134M131 94.40H134M132.2 98.92H134M132.2 103.44H134M132.2 107.96H134M132.2 112.48H134M126 117.00H134M132.2 121.52H134M132.2 126.04H134M132.2 130.56H134M132.2 135.08H134M131 139.60H134M132.2 144.12H134M132.2 148.64H134M132.2 153.16H134M132.2 157.68H134M126 162.20H134M132.2 166.72H134M132.2 171.24H134M132.2 175.76H134M132.2 180.28H134M131 184.80H134M132.2 189.32H134M132.2 193.84H134M132.2 198.36H134M132.2 202.88H134M126 207.40H134M132.2 211.92H134M132.2 216.44H134M132.2 220.96H134M132.2 225.48H134M131 230.00H134M132.2 234.52H134M132.2 239.04H134M132.2 243.56H134M132.2 248.08H134M126 252.60H134M132.2 257.12H134M132.2 261.64H134M132.2 266.16H134M132.2 270.68H134M131 275.20H134M132.2 279.72H134M132.2 284.24H134M132.2 288.76H134M132.2 293.28H134M126 297.80H134M132.2 302.32H134M132.2 306.84H134M132.2 311.36H134M132.2 315.88H134M131 320.40H134M132.2 324.92H134M132.2 329.44H134M132.2 333.96H134M132.2 338.48H134M126 343.00H134M132.2 347.52H134M132.2 352.04H134M132.2 356.56H134M132.2 361.08H134M131 365.60H134M132.2 370.12H134M132.2 374.64H134M132.2 379.16H134M132.2 383.68H134M126 388.20H134M132.2 392.72H134M132.2 397.24H134M132.2 401.76H134M132.2 406.28H134M131 410.80H134M132.2 415.32H134M132.2 419.84H134M132.2 424.36H134M132.2 428.88H134M126 433.40H134M132.2 437.92H134M132.2 442.44H134M132.2 446.96H134M132.2 451.48H134M131 456.00H134M132.2 460.52H134M132.2 465.04H134M132.2 469.56H134M132.2 474.08H134M126 478.60H134M132.2 483.12H134M132.2 487.64H134M132.2 492.16H134M132.2 496.68H134" stroke="#888" stroke-width="0.5" fill="none"/>
</svg>
<div class="abs" id="tools"></div><div class="abs" id="toolsh"></div>
<div class="t" style="left:703.4px;top:88.2px;font-size:5.2px;color:#333">PCB Tools</div>
<svg width="800" height="497" viewBox="0 0 800 497" style="left:0;top:0" fill="none" stroke="#333" stroke-width="0.6" stroke-linecap="round" stroke-linejoin="round">
<path d="M705.9 102.7h2.400q1 0 1 1v3.200q0 1 1 1h2.400" stroke="#444" stroke-width="0.800"/><circle cx="705.9" cy="102.7" r="0.700" fill="#444" stroke="none"/><circle cx="712.7" cy="107.9" r="0.700" fill="#444" stroke="none"/>
<circle cx="721" cy="105.1" r="2.500" stroke="#111" stroke-width="1.300"/>
<circle cx="731.6" cy="103.7" r="1.700" stroke="#222" stroke-width="0.800"/><path d="M731.6 105.4v3.200M733.3 103.7h3" stroke="#222" stroke-width="0.800"/>
<path d="M742.2 102.7h5.600M745 102.7v5.400M743.2 104.9h3.600M743.2 108.1h3.600" stroke="#666" stroke-width="0.900"/>
<path d="M760.3 105.3a3.300 3.300 0 1 0-3.300 3.300M757 105.3h3.300" stroke="#888" stroke-width="0.600"/>
<path d="M766.6 103.0a3.300 3.300 0 1 1 0 4.600" stroke="#888" stroke-width="0.600"/>
<circle cx="780.8" cy="105.3" r="3.500" stroke="#777" stroke-width="0.600"/>
<path d="M790.5 106.5l-1-1.600q.6-.8 1.400 0v-2.800q.7-.6 1.200 0v-1q.7-.6 1.200 0v.6q.7-.6 1.200 0v.8q.7-.5 1.200.2v3.800q0 2.400-2.400 2.600h-1.600q-1.400-.4-1.400-2.600z" stroke="#444" stroke-width="0.550"/>
<path d="M706.3 120.0v-6h6.400" stroke="#444" stroke-width="0.800"/><circle cx="706.3" cy="120.0" r="0.600" fill="#444" stroke="none"/><circle cx="712.7" cy="114.0" r="0.600" fill="#444" stroke="none"/>
<path d="M717.6 119.6h7.200M717.6 119.6l5.600-5.600" stroke="#444" stroke-width="0.600"/>
<path d="M729.6 113.8l6.400 6.400" stroke="#444" stroke-width="0.600"/><circle cx="729.6" cy="113.8" r="0.700" fill="#444" stroke="none"/><circle cx="736.0" cy="120.2" r="0.700" fill="#444" stroke="none"/>
<path d="M740.4 120.2v-3.200h2.600v-3.200h6.400v3.600h-2.400v2.800z" stroke="#999" stroke-width="0.600" stroke-dasharray="0.900 0.500"/>
<path d="M752.4 120.2v-3.600q0-1 1-1h1.400v-1q0-1 1-1h5.400v6.600z" stroke="#666" stroke-width="0.600"/>
<path d="M765.8 120.2l6.400-6.400" stroke="#444" stroke-width="0.600"/><path d="M766.8 117.4l1.800 1.800M768.1 116.1l1.800 1.800M769.4 114.8l1.800 1.800" stroke="#444" stroke-width="0.550"/>
<rect x="777.1" y="113.5" width="7.400" height="7" rx="0.600" stroke="#777" stroke-width="0.600"/>
<path d="M789.7 113.8l6.400 6.400M796.1 113.8l-6.400 6.400" stroke="#555" stroke-width="0.700"/><rect x="791.3" y="115.4" width="3.200" height="3.200" stroke="#555" stroke-width="0.500" stroke-dasharray="0.700 0.500"/>
</svg>
<div class="abs" id="nav"></div><div class="abs" id="navact"></div>
<div class="abs" id="tree"></div>
<div class="abs" id="sel"></div>
<div class="abs" id="filter"></div>
<div class="t" style="left:28px;top:58.8px;font-size:5.85px;color:#333">Work Space:</div>
<div class="t" style="left:71px;top:58.8px;font-size:5.85px;color:#333">Personal</div>
<div class="t" style="left:31px;top:72.3px;font-size:5.2px;color:#888">Filter</div>
<div class="nl" style="top:69.600px;color:#3d7be0">Project</div>
<div class="nl" style="top:103.600px">Design<br>Manager</div>
<div class="nl" style="top:137.200px">EELib</div>
<div class="nl" style="top:171px">Libraries</div>
<div class="nl" style="top:204.400px">Parts</div>
<div class="nl" style="top:238px">JLCPCB</div>
<div class="abs" style="left:24.400px;top:50.600px;width:97.400px;height:447px;overflow:hidden">
<div class="hd" style="left:7.3px;top:40.4px">neil parris</div>
<div class="tr" style="left:19.2px;top:51.1px;color:#333">TheStar-Instructables - master - (Neil Parris)</div>
<div class="tr" style="left:22.5px;top:60.3px;color:#333">Sheet_1</div>
<div class="tr" style="left:22.5px;top:68.5px;color:#333">PCB_2020-03-29 22:28:17</div>
<div class="tr" style="left:19.2px;top:76.6px;color:#333">test - master - (Neil Parris)</div>
<div class="tr" style="left:22.5px;top:85.5px;color:#333">Arduino Nano Playboard</div>
<div class="tr" style="left:22.5px;top:93.9px;color:#333">ATMEGA328P-rotation-test</div>
<div class="tr" style="left:19.2px;top:102.1px;color:#333">TheStar - master - (Neil Parris)</div>
<div class="tr" style="left:22.5px;top:111.0px;color:#333">Sheet_1</div>
<div class="tr" style="left:22.5px;top:119.6px;color:#fff">TheStar-PCB</div>
<div class="tr" style="left:19.2px;top:127.8px;color:#333">TheStar-WS2812B - master - (Neil Parris)</div>
<div class="tr" style="left:22.5px;top:136.6px;color:#333">LEDS</div>
<div class="tr" style="left:22.5px;top:145.0px;color:#333">TheStar-WS212-sch</div>
<div class="tr" style="left:22.5px;top:153.4px;color:#333">TheStar-WS2812-PCB</div>
<div class="tr" style="left:19.2px;top:161.9px;color:#333">GreatScott-ES8266LEDLight - master - (Neil Parris)</div>
<div class="tr" style="left:22.5px;top:170.4px;color:#333">ES8266LEDLight</div>
<div class="tr" style="left:22.5px;top:179.0px;color:#333">ES8266LEDLight-PCB</div>
<div class="tr" style="left:19.2px;top:187.4px;color:#333">test Quick Start to EasyEDA - master - (Neil Parris)</div>
<div class="tr" style="left:22.5px;top:196.3px;color:#333">Sheet_1</div>
<div class="tr" style="left:22.5px;top:204.8px;color:#333">Sheet_2</div>
<div class="tr" style="left:22.5px;top:213.4px;color:#333">pcb1</div>
<div class="tr" style="left:22.5px;top:221.8px;color:#333">test-star</div>
<div class="tr" style="left:22.5px;top:230.3px;color:#333">NanoV3.2</div>
<div class="tr" style="left:22.5px;top:238.8px;color:#333">smaller-pcb</div>
<div class="tr" style="left:22.5px;top:247.3px;color:#333">smaller-pcb2</div>
<div class="tr" style="left:19.2px;top:255.6px;color:#333">Guide - ESP8266_Quickly Design - master - (Neil Parris)</div>
<div class="tr" style="left:22.5px;top:264.3px;color:#333">ESP8266_Quickly_Design</div>
<div class="tr" style="left:22.5px;top:272.7px;color:#333">ESP82660-simple</div>
<div class="tr" style="left:19.2px;top:280.8px;color:#333">TheStar(clone-07022020) - master - (Neil Parris)</div>
<div class="tr" style="left:22.5px;top:289.9px;color:#333">Sheet_1 copy</div>
<div class="tr" style="left:22.5px;top:298.3px;color:#333">TheStar-PCB copy</div>
<div class="tr" style="left:19.2px;top:306.7px;color:#333">GreatScott-Dimmer - master - (Neil Parris)</div>
<div class="tr" style="left:19.2px;top:315.1px;color:#333">LipoChargeProtect - master - (Neil Parris)</div>
<div class="tr" style="left:22.5px;top:323.9px;color:#333">LiPoChargeProtectBoost</div>
<div class="tr" style="left:22.5px;top:332.3px;color:#333">PCB_2020-02-04 23:37:14</div>
<div class="tr" style="left:19.2px;top:340.8px;color:#333">signaling Arduino+ESP8266+SIM800 - master - (Neil Parris)</div>
<div class="tr" style="left:22.5px;top:349.4px;color:#333">Sheet_1 copy</div>
<div class="tr" style="left:22.5px;top:358.2px;color:#333">signaling_Arduino+ESP8266+SIM800</div>
<div class="hd" style="left:7.3px;top:369.1px">Joined</div>
<div class="hd" style="left:7.3px;top:380.4px">Favorite</div>
<div class="tr" style="left:19.2px;top:391.4px;color:#333">(R)LiPoChargeProtectBoost copy - master</div>
<div class="tr" style="left:19.2px;top:399.7px;color:#333">(R)signaling Arduino+ESP8266+SIM800</div>
</div>
<svg width="123" height="447" style="left:0;top:50.600px" viewBox="0 50.600 123 447" fill="none">
<path d="M26.2 94.8l2-2v2z" fill="#555"/>
<path d="M30.4 104.89999999999999l2-2v2z" fill="#555"/>
<path d="M35.6 101.39999999999999h2.2l.7.8h3.300v4.200h-6.200z" fill="#f8d862" stroke="#c49a22" stroke-width="0.5"/><path d="M35.9 103.5h5.600" stroke="#fff3b0" stroke-width="0.600"/>
<rect x="40.2" y="110.0" width="4.600" height="6" rx="1" fill="#f4f8ff" stroke="#6a9cf0" stroke-width="0.600"/><path d="M41.7 111.4v3.200" stroke="#6a9cf0" stroke-width="0.500"/>
<rect x="40" y="118.4" width="5" height="5.600" fill="#d9f0d3" stroke="#5cb85c" stroke-width="0.700"/><path d="M41.2 121.0h2.600m-1.300 0v2.400" stroke="#4cae4c" stroke-width="0.600"/>
<path d="M30.4 130.4l2-2v2z" fill="#555"/>
<path d="M35.6 126.9h2.2l.7.8h3.300v4.200h-6.200z" fill="#f8d862" stroke="#c49a22" stroke-width="0.5"/><path d="M35.9 129.0h5.600" stroke="#fff3b0" stroke-width="0.600"/>
<rect x="40" y="135.39999999999998" width="5" height="5.600" fill="#d9f0d3" stroke="#5cb85c" stroke-width="0.700"/><path d="M41.2 138.0h2.600m-1.300 0v2.400" stroke="#4cae4c" stroke-width="0.600"/>
<rect x="40" y="143.79999999999998" width="5" height="5.600" fill="#d9f0d3" stroke="#5cb85c" stroke-width="0.700"/><path d="M41.2 146.4h2.600m-1.300 0v2.400" stroke="#4cae4c" stroke-width="0.600"/>
<path d="M30.4 155.9l2-2v2z" fill="#555"/>
<path d="M35.6 152.4h2.2l.7.8h3.300v4.200h-6.200z" fill="#f8d862" stroke="#c49a22" stroke-width="0.5"/><path d="M35.9 154.5h5.600" stroke="#fff3b0" stroke-width="0.600"/>
<rect x="40.2" y="160.7" width="4.600" height="6" rx="1" fill="#f4f8ff" stroke="#6a9cf0" stroke-width="0.600"/><path d="M41.7 162.1v3.200" stroke="#6a9cf0" stroke-width="0.500"/>
<g opacity="0.45"><rect x="40" y="169.5" width="5" height="5.600" fill="#d9f0d3" stroke="#5cb85c" stroke-width="0.700"/><path d="M41.2 172.10000000000002h2.600m-1.300 0v2.400" stroke="#4cae4c" stroke-width="0.600"/></g>
<path d="M30.4 181.6l2-2v2z" fill="#555"/>
<path d="M35.6 178.1h2.2l.7.8h3.300v4.200h-6.200z" fill="#f8d862" stroke="#c49a22" stroke-width="0.5"/><path d="M35.9 180.2h5.600" stroke="#fff3b0" stroke-width="0.600"/>
<rect x="40.2" y="186.3" width="4.600" height="6" rx="1" fill="#f4f8ff" stroke="#6a9cf0" stroke-width="0.600"/><path d="M41.7 187.70000000000002v3.200" stroke="#6a9cf0" stroke-width="0.500"/>
<rect x="40.2" y="194.7" width="4.600" height="6" rx="1" fill="#f4f8ff" stroke="#6a9cf0" stroke-width="0.600"/><path d="M41.7 196.1v3.200" stroke="#6a9cf0" stroke-width="0.500"/>
<rect x="40" y="203.29999999999998" width="5" height="5.600" fill="#d9f0d3" stroke="#5cb85c" stroke-width="0.700"/><path d="M41.2 205.9h2.600m-1.300 0v2.400" stroke="#4cae4c" stroke-width="0.600"/>
<path d="M30.4 215.7l2-2v2z" fill="#555"/>
<path d="M35.6 212.2h2.2l.7.8h3.300v4.200h-6.200z" fill="#f8d862" stroke="#c49a22" stroke-width="0.5"/><path d="M35.9 214.29999999999998h5.600" stroke="#fff3b0" stroke-width="0.600"/>
<rect x="40.2" y="220.1" width="4.600" height="6" rx="1" fill="#f4f8ff" stroke="#6a9cf0" stroke-width="0.600"/><path d="M41.7 221.5v3.200" stroke="#6a9cf0" stroke-width="0.500"/>
<rect x="40" y="228.89999999999998" width="5" height="5.600" fill="#d9f0d3" stroke="#5cb85c" stroke-width="0.700"/><path d="M41.2 231.5h2.600m-1.300 0v2.400" stroke="#4cae4c" stroke-width="0.600"/>
<path d="M30.4 241.2l2-2v2z" fill="#555"/>
<path d="M35.6 237.7h2.2l.7.8h3.300v4.200h-6.200z" fill="#f8d862" stroke="#c49a22" stroke-width="0.5"/><path d="M35.9 239.79999999999998h5.600" stroke="#fff3b0" stroke-width="0.600"/>
<rect x="40.2" y="246.0" width="4.600" height="6" rx="1" fill="#f4f8ff" stroke="#6a9cf0" stroke-width="0.600"/><path d="M41.7 247.4v3.200" stroke="#6a9cf0" stroke-width="0.500"/>
<rect x="40.2" y="254.5" width="4.600" height="6" rx="1" fill="#f4f8ff" stroke="#6a9cf0" stroke-width="0.600"/><path d="M41.7 255.9v3.200" stroke="#6a9cf0" stroke-width="0.500"/>
<rect x="40" y="263.3" width="5" height="5.600" fill="#d9f0d3" stroke="#5cb85c" stroke-width="0.700"/><path d="M41.2 265.90000000000003h2.600m-1.300 0v2.400" stroke="#4cae4c" stroke-width="0.600"/>
<rect x="40" y="271.7" width="5" height="5.600" fill="#d9f0d3" stroke="#5cb85c" stroke-width="0.700"/><path d="M41.2 274.3h2.600m-1.300 0v2.400" stroke="#4cae4c" stroke-width="0.600"/>
<rect x="40" y="280.2" width="5" height="5.600" fill="#d9f0d3" stroke="#5cb85c" stroke-width="0.700"/><path d="M41.2 282.8h2.600m-1.300 0v2.400" stroke="#4cae4c" stroke-width="0.600"/>
<rect x="40" y="288.7" width="5" height="5.600" fill="#d9f0d3" stroke="#5cb85c" stroke-width="0.700"/><path d="M41.2 291.3h2.600m-1.300 0v2.400" stroke="#4cae4c" stroke-width="0.600"/>
<rect x="40" y="297.2" width="5" height="5.600" fill="#d9f0d3" stroke="#5cb85c" stroke-width="0.700"/><path d="M41.2 299.8h2.600m-1.300 0v2.400" stroke="#4cae4c" stroke-width="0.600"/>
<path d="M30.4 309.40000000000003l2-2v2z" fill="#555"/>
<path d="M35.6 305.90000000000003h2.2l.7.8h3.300v4.200h-6.200z" fill="#f8d862" stroke="#c49a22" stroke-width="0.5"/><path d="M35.9 308.0h5.600" stroke="#fff3b0" stroke-width="0.600"/>
<rect x="40.2" y="314.0" width="4.600" height="6" rx="1" fill="#f4f8ff" stroke="#6a9cf0" stroke-width="0.600"/><path d="M41.7 315.4v3.200" stroke="#6a9cf0" stroke-width="0.500"/>
<rect x="40" y="322.59999999999997" width="5" height="5.600" fill="#d9f0d3" stroke="#5cb85c" stroke-width="0.700"/><path d="M41.2 325.2h2.600m-1.300 0v2.400" stroke="#4cae4c" stroke-width="0.600"/>
<path d="M30.4 334.6l2-2v2z" fill="#555"/>
<path d="M35.6 331.1h2.2l.7.8h3.300v4.200h-6.200z" fill="#f8d862" stroke="#c49a22" stroke-width="0.5"/><path d="M35.9 333.2h5.600" stroke="#fff3b0" stroke-width="0.600"/>
<rect x="40.2" y="339.6" width="4.600" height="6" rx="1" fill="#f4f8ff" stroke="#6a9cf0" stroke-width="0.600"/><path d="M41.7 341.0v3.200" stroke="#6a9cf0" stroke-width="0.500"/>
<rect x="40" y="348.2" width="5" height="5.600" fill="#d9f0d3" stroke="#5cb85c" stroke-width="0.700"/><path d="M41.2 350.8h2.600m-1.300 0v2.400" stroke="#4cae4c" stroke-width="0.600"/>
<path d="M31 358.4l1.200 1-1.200 1z" fill="#777"/>
<path d="M35.6 357.0h2.2l.7.8h3.300v4.200h-6.200z" fill="#f8d862" stroke="#c49a22" stroke-width="0.5"/><path d="M35.9 359.09999999999997h5.600" stroke="#fff3b0" stroke-width="0.600"/>
<path d="M30.4 368.90000000000003l2-2v2z" fill="#555"/>
<path d="M35.6 365.40000000000003h2.2l.7.8h3.300v4.200h-6.200z" fill="#f8d862" stroke="#c49a22" stroke-width="0.5"/><path d="M35.9 367.5h5.600" stroke="#fff3b0" stroke-width="0.600"/>
<rect x="40.2" y="373.6" width="4.600" height="6" rx="1" fill="#f4f8ff" stroke="#6a9cf0" stroke-width="0.600"/><path d="M41.7 375.0v3.200" stroke="#6a9cf0" stroke-width="0.500"/>
<rect x="40" y="382.2" width="5" height="5.600" fill="#d9f0d3" stroke="#5cb85c" stroke-width="0.700"/><path d="M41.2 384.8h2.600m-1.300 0v2.400" stroke="#4cae4c" stroke-width="0.600"/>
<path d="M30.4 394.6l2-2v2z" fill="#555"/>
<path d="M35.6 391.1h2.2l.7.8h3.300v4.200h-6.200z" fill="#f8d862" stroke="#c49a22" stroke-width="0.5"/><path d="M35.9 393.2h5.600" stroke="#fff3b0" stroke-width="0.600"/>
<rect x="40.2" y="399.1" width="4.600" height="6" rx="1" fill="#f4f8ff" stroke="#6a9cf0" stroke-width="0.600"/><path d="M41.7 400.5v3.200" stroke="#6a9cf0" stroke-width="0.500"/>
<rect x="40" y="408.09999999999997" width="5" height="5.600" fill="#d9f0d3" stroke="#5cb85c" stroke-width="0.700"/><path d="M41.2 410.7h2.600m-1.300 0v2.400" stroke="#4cae4c" stroke-width="0.600"/>
<path d="M26.2 423.5l2-2v2z" fill="#555"/>
<path d="M26.2 434.8l2-2v2z" fill="#555"/>
<path d="M31 443.1l1.200 1-1.200 1z" fill="#777"/>
<path d="M35.6 441.70000000000005h2.2l.7.8h3.300v4.200h-6.200z" fill="#f8d862" stroke="#c49a22" stroke-width="0.5"/><path d="M35.9 443.8h5.600" stroke="#fff3b0" stroke-width="0.600"/>
<path d="M31 451.4l1.200 1-1.200 1z" fill="#777"/>
<path d="M35.6 450.0h2.2l.7.8h3.300v4.200h-6.200z" fill="#f8d862" stroke="#c49a22" stroke-width="0.5"/><path d="M35.9 452.09999999999997h5.600" stroke="#fff3b0" stroke-width="0.600"/>
<path d="M6.600 58.600h3l.8 1h7.400v6.800h-11.200z M6.600 60.800h11.200" stroke="#3d7be0" stroke-width="0.800"/>
<circle cx="8.600" cy="93.400" r="1.100" stroke="#333" stroke-width="0.700"/><circle cx="8.600" cy="98.800" r="1.100" stroke="#333" stroke-width="0.700"/><path d="M8.600 94.500v3.200M11.200 93.400h5M11.200 96.100h5M11.200 98.800h5" stroke="#333" stroke-width="0.800"/>
<rect x="9" y="126.200" width="6" height="8.400" rx="1" stroke="#333" stroke-width="0.800"/><path d="M7.400 128.200h1.600M7.400 130.400h1.600M7.400 132.600h1.600M15 128.200h1.600M15 130.400h1.600M15 132.600h1.600" stroke="#333" stroke-width="0.700"/>
<circle cx="10.800" cy="162.200" r="3.400" stroke="#333" stroke-width="0.900"/><circle cx="10.800" cy="162.200" r="1.500" stroke="#333" stroke-width="0.600"/><path d="M13.400 164.800l3.200 3.200" stroke="#333" stroke-width="1.200"/>
<ellipse cx="12" cy="197.400" rx="4.400" ry="3.600" stroke="#333" stroke-width="0.700"/><path d="M8 195.400q4-2 8 0" stroke="#333" stroke-width="0.500"/>
<ellipse cx="12" cy="231.400" rx="4.400" ry="3.400" stroke="#333" stroke-width="0.700"/>
<path d="M8.600 302.200l-4.400 4.200 4.400 4.200" stroke="#bbb" stroke-width="1.300"/>
<path d="M97.200 60.700h3l-1.500 1.900z" fill="#333"/>
<rect x="121.700" y="313" width="1.600" height="9.600" fill="#fff" stroke="#aaa" stroke-width="0.400"/>
</svg>
<div class="t" style="left:8.8px;top:195.6px;font-size:3.2px;color:#333;font-style:italic;font-weight:bold">LCSC</div>
<div class="t" style="left:8.4px;top:229.8px;font-size:3.2px;color:#333;font-style:italic;font-weight:bold">JLC</div>
<div class="abs" id="tabstrip"></div><div class="abs" id="atab"></div>
<div class="abs" id="addr"></div><div class="abs" id="pill"></div>
<div class="t" style="left:18.6px;top:5.4px;font-size:5.35px;letter-spacing:-0.08px;color:#f4f5f6;width:74px;overflow:hidden">EasyEDA - A Simple and Powerful Electronic</div>
<div class="abs" style="left:84px;top:1px;width:9px;height:12px;background:linear-gradient(90deg,rgba(53,54,58,0),#35363a)"></div>
<div class="t" style="left:60px;top:19.6px;font-size:5.9px;color:#9aa0a6"><span style="color:#e8eaed">easyeda.com</span>/editor#id=13bf16ef68674ac2a030d403d23e4ac7|3d09518263234f27b1e7d1be6d71f962</div>
<svg width="800" height="30" style="left:0;top:0" viewBox="0 0 800 30">
<circle cx="11.2" cy="7.3" r="3.5" fill="#2f62c9"/><path d="M9.4 6.7q1.8-1.8 3.6 0M9.8 8.3h2.8" stroke="#fff" stroke-width="0.7" fill="none"/>
<path d="M96.8 5.8l3 3m0-3l-3 3" stroke="#e8eaed" stroke-width="0.7"/>
<path d="M112.6 7.2h4.4m-2.2-2.2v4.4" stroke="#e8eaed" stroke-width="0.8"/>
<path d="M12.2 21.8h-5.4m2.4-2.5l-2.5 2.5 2.5 2.5" stroke="#e8eaed" stroke-width="0.9" fill="none"/>
<path d="M20.2 21.8h5.4m-2.4-2.5l2.5 2.5-2.5 2.5" stroke="#7b7d81" stroke-width="0.9" fill="none"/>
<path d="M39 20.2a2.9 2.9 0 1 0 .6 2.6" stroke="#e8eaed" stroke-width="0.9" fill="none"/><path d="M39.9 18.7v2.4h-2.4z" fill="#e8eaed"/>
<rect x="51.6" y="21.2" width="3.4" height="2.8" rx="0.4" fill="#e8eaed" transform="translate(0 0)"/><path d="M52.3 21.3v-1a1 1 0 0 1 2 0v1" stroke="#e8eaed" stroke-width="0.6" fill="none"/>
</svg>
<div class="abs" id="toolbar"></div>
<div class="t" style="left:22.4px;top:36.2px;font-size:9.5px;font-weight:bold;font-style:italic;color:#5a8df0;letter-spacing:-0.12px;transform:scale(1,1.36);transform-origin:0 50%">EasyEDA<span style="font-size:8.5px;letter-spacing:0;padding-left:1.4px"> · Std</span></div>
<div class="t" style="left:73px;top:37.5px;font-size:5.9px;color:#333;left:292px">270%</div>
<div class="t" style="left:409px;top:38.3px;font-size:4px;font-weight:bold;color:#333">BOM</div>
<svg width="800" height="21" style="left:0;top:29.6px" viewBox="0 29.6 800 21" fill="none" stroke="#333" stroke-width="0.7" stroke-linecap="round" stroke-linejoin="round">
<g transform="translate(0 0.9)"><path d="M8.2 43.6a3 3 0 0 1-.4-5.9 4.2 4.2 0 0 1 8-1.200 3.400 3.400 0 0 1 .9 6.700h-3.200" stroke="#4f83e6" stroke-width="1.100"/>
<path d="M9.8 42.1h4.4" stroke="#4f83e6" stroke-width="1.1"/><circle cx="8.9" cy="43.6" r="1.3" stroke="#4f83e6" stroke-width="1"/></g>
<circle cx="94.6" cy="40.400" r="0.700" fill="#4f83e6" stroke="none"/>
<path d="M102.6 37.6h3l.9 1h4.1v5h-8z"/>
<path d="M115.15 39.70h2.5l-1.25 1.600z" fill="#222" stroke="none"/>
<path d="M127.6 38.6h4.4v3.6h-3m-2.6-3.600l1.4-1.300m-1.400 1.300l1.400 1.300" stroke="#e3e3e3"/>
<path d="M149.8 38.6h-4.400v3.600h3m2.600-3.600l-1.400-1.300m1.400 1.300l-1.400 1.300" stroke="#e3e3e3"/>
<path d="M161.4 43l.5-2 4-4 1.500 1.500-4 4zM165 37.900l1.500 1.500"/>
<path d="M172.35 39.70h2.5l-1.25 1.600z" fill="#222" stroke="none"/>
<path d="M188 44.200c-1.600-2.200-2.400-3.400-2.400-4.600a2.400 2.400 0 0 1 4.800 0c0 1.200-.8 2.400-2.400 4.600z"/><circle cx="188" cy="39.500" r="0.800"/>
<path d="M196.35 39.70h2.5l-1.25 1.600z" fill="#222" stroke="none"/>
<path d="M208.600 36.600v7.200M210 38h2.400v1.800h-2.400zM210 41.200h4.200v1.900h-4.200z"/>
<path d="M220.55 39.70h2.5l-1.25 1.600z" fill="#222" stroke="none"/>
<path d="M232.600 43.400h6.200M235.400 37l2.600 5h-4.600zM235.400 36.400v7"/>
<path d="M244.35 39.70h2.5l-1.25 1.600z" fill="#222" stroke="none"/>
<path d="M255.400 40.100q4-4.400 8 0q-4 4.400-8 0z"/><circle cx="259.400" cy="40.100" r="1.300"/>
<path d="M268.35 39.70h2.5l-1.25 1.600z" fill="#222" stroke="none"/>
<circle cx="282.400" cy="39.300" r="2.600"/><path d="M284.400 41.300l2.200 2.400M281.200 39.300h2.400m-1.200-1.200v2.400"/>
<path d="M309.15 39.70h2.5l-1.25 1.600z" fill="#222" stroke="none"/>
<path d="M321.200 38.800v4.200h6.400v-4.600h-2M322.400 38.600h3.400m-1.300-1.200l1.300 1.200-1.300 1.200"/>
<path d="M337.600 38.400h1.600l.7-1h2.800l.7 1h1.600v4.800h-7.400z"/><circle cx="341.300" cy="40.700" r="1.500"/>
<path d="M350.35 39.70h2.5l-1.25 1.600z" fill="#222" stroke="none"/>
<circle cx="363" cy="38.200" r="0.900"/><circle cx="367.600" cy="39.600" r="0.900"/><circle cx="363.600" cy="42.400" r="0.900"/><path d="M363.900 38.400l2.800 1M366.800 40.200l-2.400 1.700M361.600 40.300h4"/>
<path d="M374.15 39.70h2.5l-1.25 1.600z" fill="#222" stroke="none"/>
<path d="M386.800 37v6.600M389 37v6.600M391 37.400v6"/><rect x="386" y="38.400" width="1.600" height="3"/><rect x="390.200" y="38.800" width="1.600" height="3.600"/>
<path d="M398.35 39.70h2.5l-1.25 1.600z" fill="#222" stroke="none"/>
<path d="M427 37.400v5.800h6.200M428.200 41.600l1.800-2 1.300 1 2.200-2.800M432 37.600h1.600v1.600"/>
<circle cx="444.600" cy="40.200" r="0.900"/><circle cx="449" cy="37.900" r="0.900"/><circle cx="449" cy="42.600" r="0.900"/><path d="M445.400 39.800l2.800-1.500M445.400 40.700l2.800 1.500"/>
<path d="M461.400 40.200a3.100 3.100 0 1 1 1 2.300M460.600 38.600l.8 1.700 1.600-.8M464.400 38.600v1.800l1.200.8"/>
<path d="M477.400 38.900l3.200-1.600 3.200 1.600-3.200 1.600zM477.400 40.500l3.200 1.600 3.200-1.600M477.400 42l3.200 1.600 3.200-1.600"/>
<circle cx="498" cy="40.200" r="3.100" stroke-width="0.800" stroke-dasharray="1.500 0.450"/><circle cx="498" cy="40.200" r="1.300" stroke-width="0.600"/>
<path d="M506.95 39.70h2.5l-1.25 1.600z" fill="#222" stroke="none"/>
<circle cx="521.400" cy="40.200" r="3.100"/><path d="M520.400 39.300a1 1 0 1 1 1.500.9q-.5.300-.5.900M521.400 42.100v.1" stroke-width="0.6"/>
<path d="M530.35 39.70h2.5l-1.25 1.600z" fill="#222" stroke="none"/>
</svg>
<div class="abs" id="etabs">
<div class="etab" style="left:1px;width:28.6px"></div>
<div class="etab" style="left:29.6px;width:70px"></div>
<div class="etab" style="left:99.6px;width:67px;background:#f7f7f7"></div>
</div>
<div class="t" style="left:128px;top:54.8px;font-size:5.85px;color:#333">Start</div>
<div class="t" style="left:166.2px;top:54.8px;font-size:5.85px;color:#333">TheStar</div>
<div class="t" style="left:234.4px;top:54.8px;font-size:5.85px;color:#333">TheStar-PCB</div>
<svg width="800" height="20" style="left:0;top:45px" viewBox="0 45 800 20">
<path d="M158.6 54.4h-0.9v6h0.9m2.6-6h0.9v6h-0.9" stroke="#5b8def" stroke-width="0.7" fill="#eef3ff"/><rect x="157.6" y="54.2" width="4.8" height="6.4" rx="0.8" fill="none" stroke="#9db8f0" stroke-width="0.5"/>
<rect x="224.2" y="54.6" width="5" height="5.6" fill="#dff0d8" stroke="#5cb85c" stroke-width="0.7"/><path d="M225.4 57.4h2.6m-1.3 0v2.6" stroke="#5cb85c" stroke-width="0.6"/>
</svg>
</div>
</body></html>
